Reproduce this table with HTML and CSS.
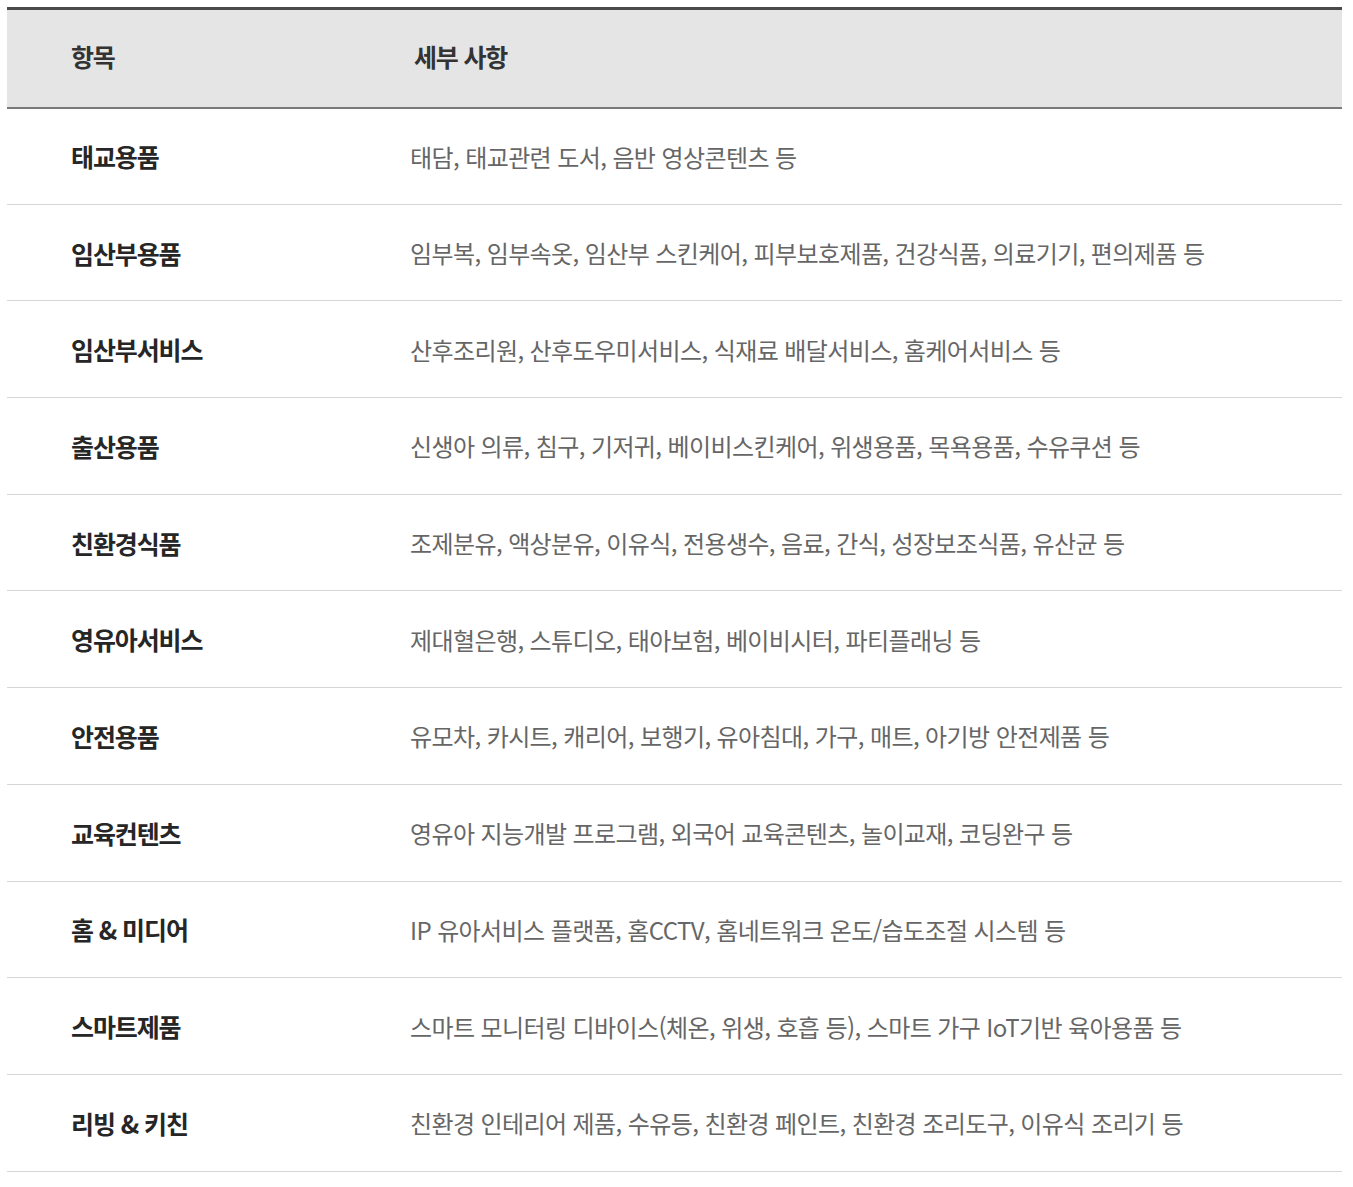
FILE: index.html
```html
<!DOCTYPE html>
<html lang="ko">
<head>
<meta charset="utf-8">
<link rel="stylesheet" href="styles.css">
</head>
<body>
<div class="wrap">
<table class="spec">
  <thead>
    <tr><th class="c1">항목</th><th class="c2">세부 사항</th></tr>
  </thead>
  <tbody>
    <tr><td class="c1">태교용품</td><td class="c2">태담, 태교관련 도서, 음반 영상콘텐츠 등</td></tr>
    <tr><td class="c1">임산부용품</td><td class="c2">임부복, 임부속옷, 임산부 스킨케어, 피부보호제품, 건강식품, 의료기기, 편의제품 등</td></tr>
    <tr><td class="c1">임산부서비스</td><td class="c2">산후조리원, 산후도우미서비스, 식재료 배달서비스, 홈케어서비스 등</td></tr>
    <tr><td class="c1">출산용품</td><td class="c2">신생아 의류, 침구, 기저귀, 베이비스킨케어, 위생용품, 목욕용품, 수유쿠션 등</td></tr>
    <tr><td class="c1">친환경식품</td><td class="c2">조제분유, 액상분유, 이유식, 전용생수, 음료, 간식, 성장보조식품, 유산균 등</td></tr>
    <tr><td class="c1">영유아서비스</td><td class="c2">제대혈은행, 스튜디오, 태아보험, 베이비시터, 파티플래닝 등</td></tr>
    <tr><td class="c1">안전용품</td><td class="c2">유모차, 카시트, 캐리어, 보행기, 유아침대, 가구, 매트, 아기방 안전제품 등</td></tr>
    <tr><td class="c1">교육컨텐츠</td><td class="c2">영유아 지능개발 프로그램, 외국어 교육콘텐츠, 놀이교재, 코딩완구 등</td></tr>
    <tr><td class="c1">홈 &amp; 미디어</td><td class="c2">IP 유아서비스 플랫폼, 홈CCTV, 홈네트워크 온도/습도조절 시스템 등</td></tr>
    <tr><td class="c1">스마트제품</td><td class="c2">스마트 모니터링 디바이스(체온, 위생, 호흡 등), 스마트 가구 IoT기반 육아용품 등</td></tr>
    <tr><td class="c1">리빙 &amp; 키친</td><td class="c2">친환경 인테리어 제품, 수유등, 친환경 페인트, 친환경 조리도구, 이유식 조리기 등</td></tr>
  </tbody>
</table>
</div>
</body>
</html>
```
FILE: styles.css
```css
html, body {
  margin: 0;
  padding: 0;
  background: #ffffff;
}
.wrap {
  padding: 7px 11px 0 7px;
}
.spec {
  width: 1335px;
  border-collapse: collapse;
  font-family: "Noto Sans CJK KR", "Noto Sans", sans-serif;
  border-top: 3px solid #4a4a4a;
}
.spec th {
  background: #e5e5e5;
  height: 99px;
  box-sizing: border-box;
  text-align: left;
  font-size: 25px;
  letter-spacing: -1.2px;
  font-weight: 700;
  color: #333333;
  border-bottom: 2px solid #7a7a7a;
  padding: 0 0 4px 0;
}
.spec th.c2 {
  padding-left: 4px;
}
.spec td {
  height: 96.7px;
  box-sizing: border-box;
  padding: 0;
  border-bottom: 1px solid #d6d6d6;
  vertical-align: middle;
}
.spec .c1 {
  width: 403px;
  padding-left: 64px;
}
.spec td.c1 {
  font-size: 25px;
  letter-spacing: -1.1px;
  font-weight: 700;
  color: #262626;
}
.spec td.c2 {
  font-size: 24px;
  letter-spacing: -0.6px;
  color: #666666;
  font-weight: 400;
}
```
